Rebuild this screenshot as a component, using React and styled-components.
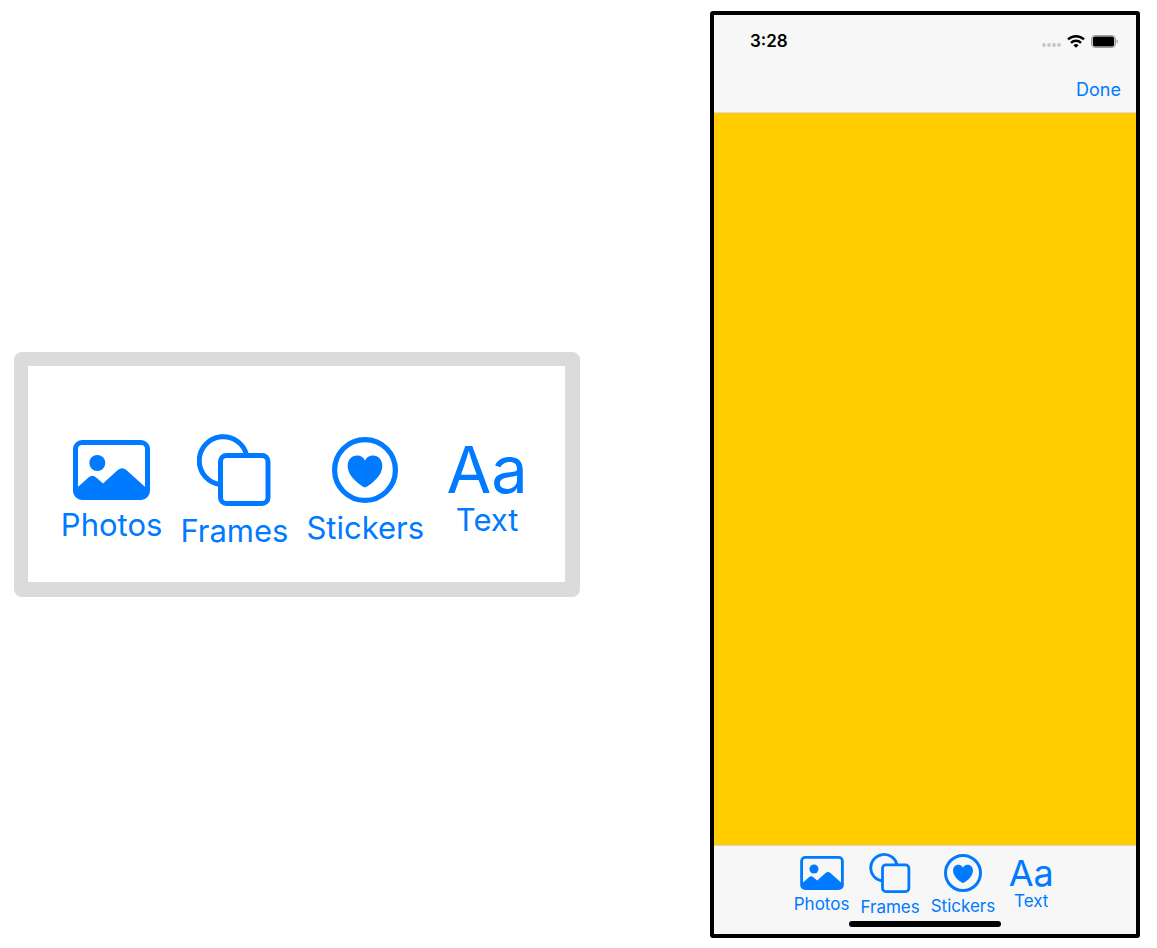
import React from "react";
import styled, { createGlobalStyle } from "styled-components";

const GlobalStyle = createGlobalStyle`
  * { box-sizing: border-box; }
  body {
    margin: 0;
    background: #ffffff;
    font-family: Inter, "Liberation Sans", sans-serif;
  }
`;

const BLUE = "#007aff";

const Page = styled.main`
  display: grid;
  grid-template-columns: minmax(0, 566fr) minmax(0, 430fr);
  column-gap: 130px;
  align-items: center;
  min-height: 100vh;
  padding: 11px 17px 10px 14px;
`;

const Card = styled.section`
  padding: 68px 0 33px;
  border: 14px solid #dbdbdb;
  border-right-width: 15px;
  border-bottom-width: 15px;
  border-radius: 8px;
  background: #ffffff;
`;

const Phone = styled.section`
  display: flex;
  flex-direction: column;
  align-self: stretch;
  border: 4px solid #000000;
  border-radius: 3px;
  background: #f7f7f7;
`;

const Header = styled.header`
  border-bottom: 1px solid #dcdcdc;
`;

const StatusBar = styled.div`
  display: flex;
  align-items: center;
  justify-content: space-between;
  height: 52px;
  padding: 0 18px 0 36px;
`;

const Clock = styled.time`
  color: #000000;
  font-size: 17px;
  font-weight: 600;
  line-height: 20px;
`;

const StatusIcons = styled.div`
  display: flex;
  align-items: center;
  gap: 6px;

  svg { display: block; }
`;

const NavBar = styled.nav`
  display: flex;
  align-items: center;
  justify-content: flex-end;
  height: 45px;
  padding: 0 15px;
`;

const DoneButton = styled.button`
  padding: 0;
  border: 0;
  background: none;
  color: ${BLUE};
  font: 400 18px/20px Inter, "Liberation Sans", sans-serif;
`;

const Canvas = styled.div`
  flex: 1;
  background: #ffcc00;
`;

const BottomBar = styled.footer`
  display: flex;
  flex-direction: column;
  align-items: center;
  gap: 4px;
  padding: 7px 0;
  border-top: 1px solid #d4d4d4;
`;

const HomeIndicator = styled.div`
  width: 36%;
  height: 6px;
  border-radius: 3px;
  background: #000000;
`;

const Tools = styled.div`
  display: flex;
  align-items: flex-start;
  justify-content: center;
  gap: ${({ $size }) => $size.gap}px;
`;

const ToolButton = styled.button`
  display: flex;
  flex-direction: column;
  align-items: center;
  padding: ${({ $top }) => $top}px 0 0;
  border: 0;
  background: none;
  color: ${BLUE};
  font-family: inherit;

  svg { display: block; }
`;

const ToolLabel = styled.span`
  margin-top: ${({ $size }) => $size.labelGap}px;
  font-size: ${({ $size }) => $size.label}px;
  line-height: ${({ $size }) => $size.labelLine}px;
`;

const Letters = styled.span`
  min-width: ${({ $size }) => $size.text[0]}px;
  font-size: ${({ $size }) => $size.letters}px;
  line-height: ${({ $size }) => $size.text[1]}px;
  text-align: center;
`;

const LARGE = {
  gap: 18, slot: 72, label: 31, labelLine: 36, labelGap: 7, letters: 65,
  photos: [77, 60], frames: [74, 72], stickers: [66, 66], text: [90, 50],
};

const SMALL = {
  gap: 11, slot: 40, label: 17, labelLine: 20, labelGap: 4, letters: 36,
  photos: [44, 34], frames: [42, 40], stickers: [38, 38], text: [50, 28],
};

const PhotosIcon = ({ box }) => (
  <svg width={box[0]} height={box[1]} viewBox="0 0 77 60" fill="none" aria-hidden="true">
    <rect x="2.5" y="2.5" width="72" height="55" rx="6.5" stroke="currentColor" strokeWidth="5" />
    <circle cx="24.3" cy="23" r="8" fill="currentColor" />
    <path
      d="M4 47.8 L15.5 37.4 Q19.3 34 23.2 37.4 L30 43.4 L44.8 30 Q49 26.4 53.3 30 L73 47.8 V53 Q73 57 68 57 H9 Q4 57 4 53 Z"
      fill="currentColor"
    />
  </svg>
);

const FramesIcon = ({ box }) => (
  <svg width={box[0]} height={box[1]} viewBox="0 0 74 72" fill="none" stroke="currentColor" strokeWidth="5" aria-hidden="true">
    <path d="M23.5 50.5 A24 24 0 1 1 49.7 21.5" />
    <rect x="23.5" y="21.5" width="47.5" height="48" rx="6" />
  </svg>
);

const StickersIcon = ({ box }) => (
  <svg width={box[0]} height={box[1]} viewBox="0 0 66 66" fill="none" aria-hidden="true">
    <circle cx="33" cy="33" r="30.4" stroke="currentColor" strokeWidth="5.2" />
    <path
      d="M33 50.4 C31.5 50.2 15.7 41 15.7 29 C15.7 22.5 20 18.6 25 18.6 C28.6 18.6 31.4 20.4 33 23.6 C34.6 20.4 37.4 18.6 41 18.6 C46 18.6 50.3 22.5 50.3 29 C50.3 41 34.5 50.2 33 50.4 Z"
      fill="currentColor"
    />
  </svg>
);

const TOOLS = [
  { id: "photos", label: "Photos", Icon: PhotosIcon },
  { id: "frames", label: "Frames", Icon: FramesIcon },
  { id: "stickers", label: "Stickers", Icon: StickersIcon },
  { id: "text", label: "Text" },
];

const ToolSet = ({ size }) => (
  <Tools $size={size}>
    {TOOLS.map(({ id, label, Icon }) => (
      <ToolButton key={id} type="button" $top={(size.slot - size[id][1]) / 2}>
        {Icon ? <Icon box={size[id]} /> : <Letters $size={size}>Aa</Letters>}
        <ToolLabel $size={size}>{label}</ToolLabel>
      </ToolButton>
    ))}
  </Tools>
);

const SignalIcon = () => (
  <svg width="19" height="12" viewBox="0 0 19 12" fill="#c6c6c6" aria-hidden="true">
    {[2, 7, 12, 17].map((x) => (
      <circle key={x} cx={x} cy="10" r="1.9" />
    ))}
  </svg>
);

const WifiIcon = () => (
  <svg width="18" height="13" viewBox="0 0 18 13" fill="none" stroke="#000000" strokeWidth="2.4" aria-hidden="true">
    <path d="M1 4.4 A11.6 11.6 0 0 1 17 4.4" />
    <path d="M4 7.8 A7.2 7.2 0 0 1 14 7.8" />
    <path d="M9 12.8 L6.4 10.2 A3.8 3.8 0 0 1 11.6 10.2 Z" fill="#000000" stroke="none" />
  </svg>
);

const BatteryIcon = () => (
  <svg width="27" height="13" viewBox="0 0 27 13" aria-hidden="true">
    <rect x="0.5" y="0.5" width="24" height="12" rx="3.4" fill="none" stroke="#9c9c9c" />
    <rect x="1.8" y="1.6" width="21.4" height="9.8" rx="2" fill="#000000" />
    <path d="M25.6 4.6 Q27 5.2 27 6.5 T25.6 8.4 Z" fill="#9c9c9c" />
  </svg>
);

export default function App() {
  return (
    <>
      <GlobalStyle />
      <Page>
        <Card>
          <ToolSet size={LARGE} />
        </Card>
        <Phone>
          <Header>
            <StatusBar>
              <Clock>3:28</Clock>
              <StatusIcons>
                <SignalIcon />
                <WifiIcon />
                <BatteryIcon />
              </StatusIcons>
            </StatusBar>
            <NavBar>
              <DoneButton type="button">Done</DoneButton>
            </NavBar>
          </Header>
          <Canvas />
          <BottomBar>
            <ToolSet size={SMALL} />
            <HomeIndicator />
          </BottomBar>
        </Phone>
      </Page>
    </>
  );
}
